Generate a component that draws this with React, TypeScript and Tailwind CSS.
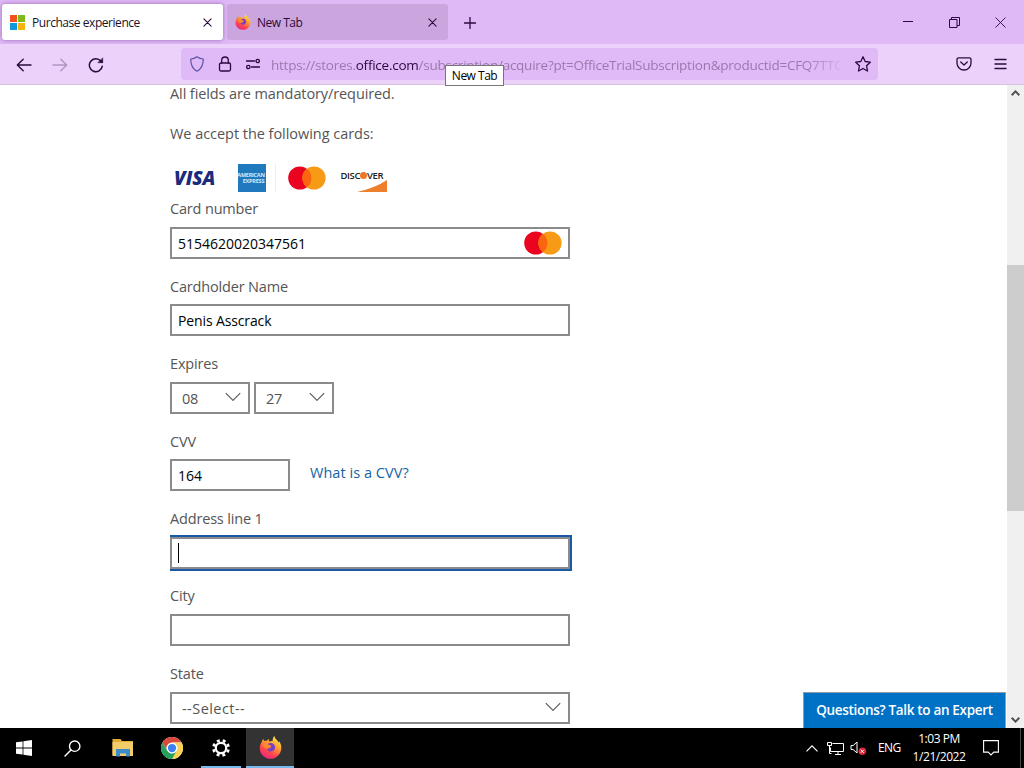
import React from "react";

const STROKE = { fill: "none", stroke: "currentColor", strokeLinecap: "round", strokeLinejoin: "round" } as const;

function MicrosoftLogo() {
  return (
    <div className="grid grid-cols-2 gap-px w-[15px] h-[15px] shrink-0">
      <span className="bg-[#f1511b]" />
      <span className="bg-[#80b81c]" />
      <span className="bg-[#1098de]" />
      <span className="bg-[#f2b50f]" />
    </div>
  );
}

function FirefoxLogo({ id, className }: { id: string; className: string }) {
  return (
    <svg className={className} viewBox="0 0 24 24">
      <defs>
        <linearGradient id={id} x1="0.8" y1="0" x2="0.25" y2="1">
          <stop offset="0" stopColor="#fff04a" />
          <stop offset="0.4" stopColor="#ff9a2e" />
          <stop offset="0.72" stopColor="#ff4350" />
          <stop offset="1" stopColor="#e5238a" />
        </linearGradient>
      </defs>
      <path
        fill={`url(#${id})`}
        d="M2.8 6.2c.2-1.4.8-2.5 1.7-3.4.1 1 .4 1.7 1 2.3.8-.3 1.7-.3 2.5-.1.8-1 1.9-1.6 3-1.8-.8.8-1 1.7-.7 2.5L14.4 5c-.4-1.9.3-3.7 1.7-5 .2 2.2 1.5 3.1 2.8 4.4.8.8 1.4 1.7 1.8 2.6l.5-1.4C22.6 8 23.5 10.3 23.3 13c-.5 6.1-5.2 10.8-11.3 10.8S.8 19 .8 12.700c0-2.300.7-4.500 2-6.500z"
      />
      <path fill="#7442c8" d="M9 8.500c1-1 2.400-1.400 3.800-1.200 2.400.3 4 2.300 4 4.500 0 2.500-2 4.400-4.500 4.400-2 0-3.700-1.200-4.300-3 1.200.4 2.400.2 3.300-.6l1.700-1-.1-.7-2.600-.4c-.2-.8-.6-1.500-1.300-2z" />
      <path fill="#ff8a2b" d="M4.500 7.500c1.500-.3 3.200.1 4.600 1.300l3.300.8c.5.700 0 1.300-.9 1.500l-1.500 1.100c-.9 1-2.100 1.200-3.400.6C5 12 4 9.800 4.500 7.500z" />
    </svg>
  );
}

function ChromeLogo() {
  return (
    <svg className="w-[22px] h-[22px]" viewBox="0 0 24 24">
      <circle cx="12" cy="12" r="12" fill="#fff" />
      <path fill="#d9493c" d="M1.600 6A12 12 0 0 1 22.400 6H12a6 6 0 0 0-5.200 9z" />
      <path fill="#fcd050" d="M22.400 6A12 12 0 0 1 12 24l5.200-9A6 6 0 0 0 12 6z" />
      <path fill="#26a05a" d="M12 24A12 12 0 0 1 1.600 6l5.200 9a6 6 0 0 0 10.400 0z" />
      <circle cx="12" cy="12" r="5.700" fill="#fff" />
      <circle cx="12" cy="12" r="4.500" fill="#3c82ee" />
    </svg>
  );
}

function Mastercard() {
  return (
    <svg className="w-[38px] h-6 shrink-0" viewBox="0 0 38 24">
      <circle cx="11.800" cy="12" r="11.600" fill="#ea0420" />
      <circle cx="26" cy="12" r="11.600" fill="#f79b16" />
      <path d="M18.900 2.800a11.600 11.600 0 0 1 0 18.400 11.600 11.600 0 0 1 0-18.400z" fill="#fb6510" />
    </svg>
  );
}

function CloseIcon() {
  return (
    <svg className="w-[9px] h-[9px] shrink-0" viewBox="0 0 9 9" {...STROKE} strokeWidth="1.100">
      <path d="M.9.9l7.200 7.200M8.100.9L.9 8.100" />
    </svg>
  );
}

function Chevron() {
  return (
    <svg className="w-4 h-[10px] -mt-1 shrink-0" viewBox="0 0 16 10" {...STROKE} strokeLinecap="butt" strokeWidth="1.100">
      <path d="M.8 1.200L8 8.400l7.200-7.200" />
    </svg>
  );
}

function TabStrip() {
  return (
    <div className="flex h-11 pt-1 pl-0.5 bg-[#dfb9f6] text-[#2b0a3d]">
      <div className="flex items-center w-[221px] h-9 pl-2 pr-[11px] rounded-[3px] bg-white shadow-[0_0_4px_rgba(90,40,120,0.55)]">
        <MicrosoftLogo />
        <span className="ml-[7px] mt-0.5 flex-1 text-[12px] tracking-[-0.45px] text-[#1d1027] whitespace-nowrap">Purchase experience</span>
        <CloseIcon />
      </div>
      <div className="flex items-center w-[221px] h-9 ml-1 pl-2 pr-[11px] rounded-[3px] bg-[#cba6de]">
        <FirefoxLogo id="ff-tab" className="w-4 h-4 shrink-0" />
        <span className="ml-1.5 mt-0.5 flex-1 text-[12px] tracking-[-0.5px] whitespace-nowrap">New Tab</span>
        <CloseIcon />
      </div>
      <div className="flex flex-1 items-center h-9 pl-4">
        <svg className="w-3 h-3 mt-px" viewBox="0 0 12 12" {...STROKE} strokeWidth="1.300">
          <path d="M6 .5v11M.5 6h11" />
        </svg>
      </div>
      <div className="flex items-center h-9 pr-[18px]">
        <svg className="w-[10px] h-[10px]" viewBox="0 0 10 10">
          <path d="M0 4.500h10" stroke="currentColor" />
        </svg>
        <svg className="w-[11px] h-[11px] ml-9" viewBox="0 0 11 11" fill="none" stroke="currentColor">
          <path d="M.5 2.500h7.500v8H.5zM2.500 2.500v-2h8v8H8" />
        </svg>
        <svg className="w-[11px] h-[11px] ml-[35px]" viewBox="0 0 11 11" fill="none" stroke="currentColor" strokeWidth="0.900">
          <path d="M.5.5l10 10M10.500.5l-10 10" />
        </svg>
      </div>
    </div>
  );
}

function Toolbar() {
  return (
    <div className="flex items-center h-[41px] pl-4 pr-[17px] bg-[#ecd2fa] border-b border-[#d8c2e2] text-[#2b0a3d]">
      <svg className="w-4 h-4 mt-px" viewBox="0 0 16 16" {...STROKE} strokeWidth="1.400">
        <path d="M15 8H1.500M7.200 2.200L1.300 8l5.900 5.800" />
      </svg>
      <svg className="w-4 h-4 mt-px ml-5 text-[#b293c2]" viewBox="0 0 16 16" {...STROKE} strokeWidth="1.400">
        <path d="M1 8h13.500M8.800 2.200L14.700 8l-5.900 5.800" />
      </svg>
      <svg className="w-4 h-4 mt-px ml-5" viewBox="0 0 16 16" {...STROKE} strokeWidth="1.500">
        <path d="M14.300 9.200A6.500 6.500 0 1 1 12.800 4L14 5.200" />
        <path d="M14.700 1.200v4.500h-4.500z" fill="currentColor" strokeWidth="0.600" />
      </svg>

      <div className="flex items-center w-[697px] h-8 ml-[77px] pl-2 pr-[7px] rounded bg-[#dfbaf6]">
        <svg className="w-4 h-4 shrink-0 text-[#5b52a5]" viewBox="0 0 16 16" {...STROKE} strokeWidth="1.200">
          <path d="M8 .8c1.800 1.500 4 2.200 6.300 2.200 0 5-1.300 9.800-6.300 12.200C3 12.800 1.700 8 1.700 3 4 3 6.200 2.300 8 .8z" />
        </svg>
        <svg className="w-4 h-4 ml-3 shrink-0" viewBox="0 0 16 16" {...STROKE} strokeWidth="1.300">
          <rect x="2.500" y="7" width="11" height="8" rx="1.500" />
          <path d="M4.700 7V4.300a3.300 3.300 0 0 1 6.600 0V7" />
        </svg>
        <svg className="w-4 h-4 ml-3 shrink-0" viewBox="0 0 16 16" {...STROKE} strokeWidth="1.300">
          <path d="M1.500 5h8M6.500 11h8" />
          <circle cx="12.700" cy="5" r="1.700" />
          <circle cx="3.300" cy="11" r="1.700" />
        </svg>
        <div className="ml-[10px] mt-0.5 w-[575px] overflow-hidden whitespace-nowrap text-[13.5px] leading-5 tracking-[-0.25px] text-[#9c78ad] [mask-image:linear-gradient(to_right,#000_93%,transparent)]">
          https://stores.<span className="text-[#2b0a3d]">office.com</span>/subscription/acquire?pt=OfficeTrialSubscription&amp;productid=CFQ7TTC
        </div>
        <svg className="w-4 h-4 ml-auto shrink-0" viewBox="0 0 16 16" {...STROKE} strokeWidth="1.300">
          <path d="M8 .8l2.200 4.700 5.100.7-3.700 3.600.9 5.200L8 12.500 3.500 15l.9-5.200L.7 6.200l5.100-.7z" />
        </svg>
      </div>

      <svg className="w-4 h-4 ml-auto" viewBox="0 0 16 16" {...STROKE} strokeWidth="1.300">
        <path d="M2.500 1.800h11a1.500 1.500 0 0 1 1.500 1.500v3.700a7 7 0 0 1-14 0V3.300a1.500 1.500 0 0 1 1.500-1.500zM4.700 6L8 9l3.300-3" />
      </svg>
      <svg className="w-[13px] h-3 ml-[22px]" viewBox="0 0 13 12" {...STROKE} strokeWidth="1.400">
        <path d="M1 1.500h11M1 6h11M1 10.500h11" />
      </svg>
    </div>
  );
}

function CardLogos() {
  return (
    <div className="flex items-center h-8 mt-[19px]">
      <div className="w-[67.5px] pl-[4px] text-[19px] leading-[34px] font-extrabold italic tracking-[-0.1px] text-[#182b7c]">VISA</div>
      <div className="flex flex-col items-center justify-center w-7 h-7 pt-px bg-[#2079bd] text-[5.5px] leading-[7px] font-bold text-[#d5eafa]">
        <span className="-ml-px tracking-[-0.25px]">AMERICAN</span>
        <span className="ml-1 -mt-px tracking-[-0.2px]">EXPRESS</span>
      </div>
      <div className="ml-[9px] mr-3 w-px h-7 bg-[#eeeeee]" />
      <Mastercard />
      <div className="flex flex-col w-[47px] h-7 ml-[15px]">
        <div className="flex items-center h-[23px] text-[9.5px] font-semibold tracking-[-0.4px] text-[#222222]">
          DISC
          <span className="w-[7px] h-[7px] rounded-full bg-[#ef7623]" />
          VER
        </div>
        <svg className="w-[30px] h-3 -mt-[7px] ml-auto mr-px shrink-0" viewBox="0 0 30 12">
          <path d="M30 0v12H0Q18 8 30 0z" fill="#ee7f2d" />
        </svg>
      </div>
    </div>
  );
}

function Field({ label, children }: { label: string; children: React.ReactNode }) {
  return (
    <div className="h-[77.45px]">
      <div className="h-7 pt-[0.3px] leading-5">{label}</div>
      {children}
    </div>
  );
}

const BOX = "flex items-center h-8 border-2 border-[#8b8b8b] bg-white";

function PaymentForm() {
  return (
    <div className="w-[400px] ml-[170px] text-[14.5px] leading-[18px] tracking-[-0.1px] text-[#555555] whitespace-nowrap">
      <p>All fields are mandatory/required.</p>
      <p className="mt-[22px] tracking-[-0.04px]">We accept the following cards:</p>
      <CardLogos />
      <div className="mt-[5px] tracking-[-0.17px]">
        <Field label="Card number">
          <div className={`${BOX} justify-between pl-1.5 pr-1.5 text-black`}>
            <span className="mt-0.5 text-[14px] tracking-normal">5154620020347561</span>
            <Mastercard />
          </div>
        </Field>
        <Field label="Cardholder Name">
          <div className={`${BOX} pl-1.5 pt-px text-[14px] tracking-[-0.13px] text-black`}>Penis Asscrack</div>
        </Field>
        <Field label="Expires">
          <div className="flex gap-1">
            {["08", "27"].map(value => (
              <div key={value} className={`${BOX} w-20 pt-0.5 justify-between pl-[10px] pr-[7px]`}>
                {value}
                <Chevron />
              </div>
            ))}
          </div>
        </Field>
        <Field label="CVV">
          <div className="flex">
            <div className={`${BOX} w-[120px] pl-1.5 pt-0.5 text-[14px] tracking-normal text-black`}>164</div>
            <a className="ml-5 mt-[5px] tracking-[0.04px] text-[#1464a5]">What is a CVV?</a>
          </div>
        </Field>
        <Field label="Address line 1">
          <div className={`${BOX} pl-1.5 shadow-[2px_-2px_#1c58a8,0_-2px_#1c58a8,2px_2px_#1c58a8,0_2px_#1c58a8]`}>
            <span className="w-px h-5 bg-black" />
          </div>
        </Field>
        <Field label="City">
          <div className={BOX} />
        </Field>
        <Field label="State">
          <div className={`${BOX} justify-between pt-0.5 pl-[10px] pr-[7px]`}>
            <span className="tracking-[0.45px]">--Select--</span>
            <Chevron />
          </div>
        </Field>
      </div>
    </div>
  );
}

function Scrollbar() {
  return (
    <div className="flex flex-col items-center w-[17px] h-full bg-[#f0f0f0] text-[#505050]">
      <svg className="w-[9px] h-[6px] mt-[5px]" viewBox="0 0 9 6" fill="none" stroke="currentColor" strokeWidth="2">
        <path d="M.7 5.200l3.800-3.800 3.800 3.800" />
      </svg>
      <div className="w-full h-[246px] mt-[169px] bg-[#cdcdcd]" />
      <svg className="w-[9px] h-[6px] mt-auto mb-[5px]" viewBox="0 0 9 6" fill="none" stroke="currentColor" strokeWidth="2">
        <path d="M.7.8l3.800 3.800L8.300.8" />
      </svg>
    </div>
  );
}

function Taskbar() {
  return (
    <div className="flex h-10 bg-black text-white">
      <div className="flex items-center justify-center w-12">
        <svg className="w-4 h-4" viewBox="0 0 16 16" fill="currentColor">
          <path d="M0 2.300l6.600-.9v6.200H0zM7.400 1.300L16 0v7.600H7.400zM0 8.400h6.600v6.200L0 13.700zM7.400 8.400H16V16l-8.600-1.300z" />
        </svg>
      </div>
      <div className="flex items-center justify-center w-12">
        <svg className="w-[17px] h-[17px]" viewBox="0 0 17 17" {...STROKE} strokeWidth="1.400">
          <circle cx="10.700" cy="6.200" r="5.200" />
          <path d="M7 10L1 16" />
        </svg>
      </div>
      <div className="flex items-center justify-center w-[53px]">
        <svg className="w-[22px] h-[18px]" viewBox="0 0 22 18">
          <path d="M.5 0h8l1.500 2h11v14H.5z" fill="#e3ad38" />
          <path d="M.5 3h20.500v14H.5z" fill="#f5cc6a" />
          <path d="M4 17.500V10h14v7.500h-4v-3H8v3z" fill="#3e8cc7" />
        </svg>
      </div>
      <div className="flex items-center justify-center w-[46px]">
        <ChromeLogo />
      </div>
      <div className="flex items-center justify-center w-[51px] relative">
        <svg className="w-[18px] h-[18px]" viewBox="0 0 18 18" fill="none" stroke="currentColor">
          <circle cx="9" cy="9" r="5.200" strokeWidth="2.200" />
          <circle cx="9" cy="9" r="7.500" strokeWidth="2.800" strokeDasharray="2.900 2.990" strokeDashoffset="4.400" />
        </svg>
        <span className="absolute left-[6px] bottom-0 w-10 h-0.5 bg-[#76b9ed]" />
      </div>
      <div className="flex items-center justify-center w-12 bg-[#333333] border-b-2 border-[#76b9ed]">
        <FirefoxLogo id="ff-task" className="w-[23px] h-[23px]" />
      </div>

      <div className="flex items-center ml-auto pr-[3px] text-[12px]">
        <svg className="w-3 h-[7px]" viewBox="0 0 12 7" fill="none" stroke="currentColor" strokeWidth="1.200">
          <path d="M.5 6.400L6 .9l5.500 5.500" />
        </svg>
        <svg className="w-[17px] h-[15px] ml-[9px]" viewBox="0 0 17 15" fill="none" stroke="currentColor">
          <path d="M5.500 2.500h11v8H3.500v-4M8 13.500h6M11 10.500v3M.5 1.500h4v3h-4zM2.500 4.500v8h2" />
        </svg>
        <svg className="w-[17px] h-[16px] ml-[6px]" viewBox="0 0 17 16" fill="none" stroke="currentColor">
          <path d="M1 5.500h2.200L7 2v11L3.200 9.500H1z" />
          <circle cx="12.300" cy="11.300" r="3.800" fill="#d8283c" stroke="none" />
          <path d="M10.700 9.700l3.200 3.200M13.900 9.700l-3.200 3.200" />
        </svg>
        <span className="ml-[11px] w-6 tracking-[-0.6px]">ENG</span>
        <div className="ml-[7px] w-[60px] leading-[18px] text-center tracking-[-0.45px] whitespace-nowrap">
          <div>1:03 PM</div>
          <div>1/21/2022</div>
        </div>
        <svg className="w-4 h-4 ml-[14px] mr-[21px]" viewBox="0 0 16 16" fill="none" stroke="currentColor" strokeWidth="1.100">
          <path d="M.6.6h14.800v11.500h-4.600L8 15l-2.800-2.900H.6z" />
        </svg>
        <span className="w-px h-10 bg-[#4a4a4a]" />
      </div>
    </div>
  );
}

export default function App() {
  return (
    <div className="relative flex flex-col w-[1024px] h-[768px] overflow-hidden bg-white font-['Open_Sans','Noto_Sans',sans-serif]">
      <TabStrip />
      <Toolbar />
      <div className="flex justify-between h-[643px] overflow-hidden">
        <PaymentForm />
        <Scrollbar />
      </div>
      <Taskbar />

      <div className="absolute left-[445px] top-[65px] flex items-center justify-center w-[59px] h-[21px] border border-[#767676] bg-white text-[12px] tracking-[-0.5px] text-black whitespace-nowrap">
        New Tab
      </div>
      <div className="absolute left-[803px] top-[692px] flex items-center justify-center w-[203px] h-9 border border-b-0 border-[#8f9da8] bg-[#0072c6] text-[13.5px] font-semibold tracking-[-0.32px] text-white whitespace-nowrap">
        Questions? Talk to an Expert
      </div>
    </div>
  );
}
